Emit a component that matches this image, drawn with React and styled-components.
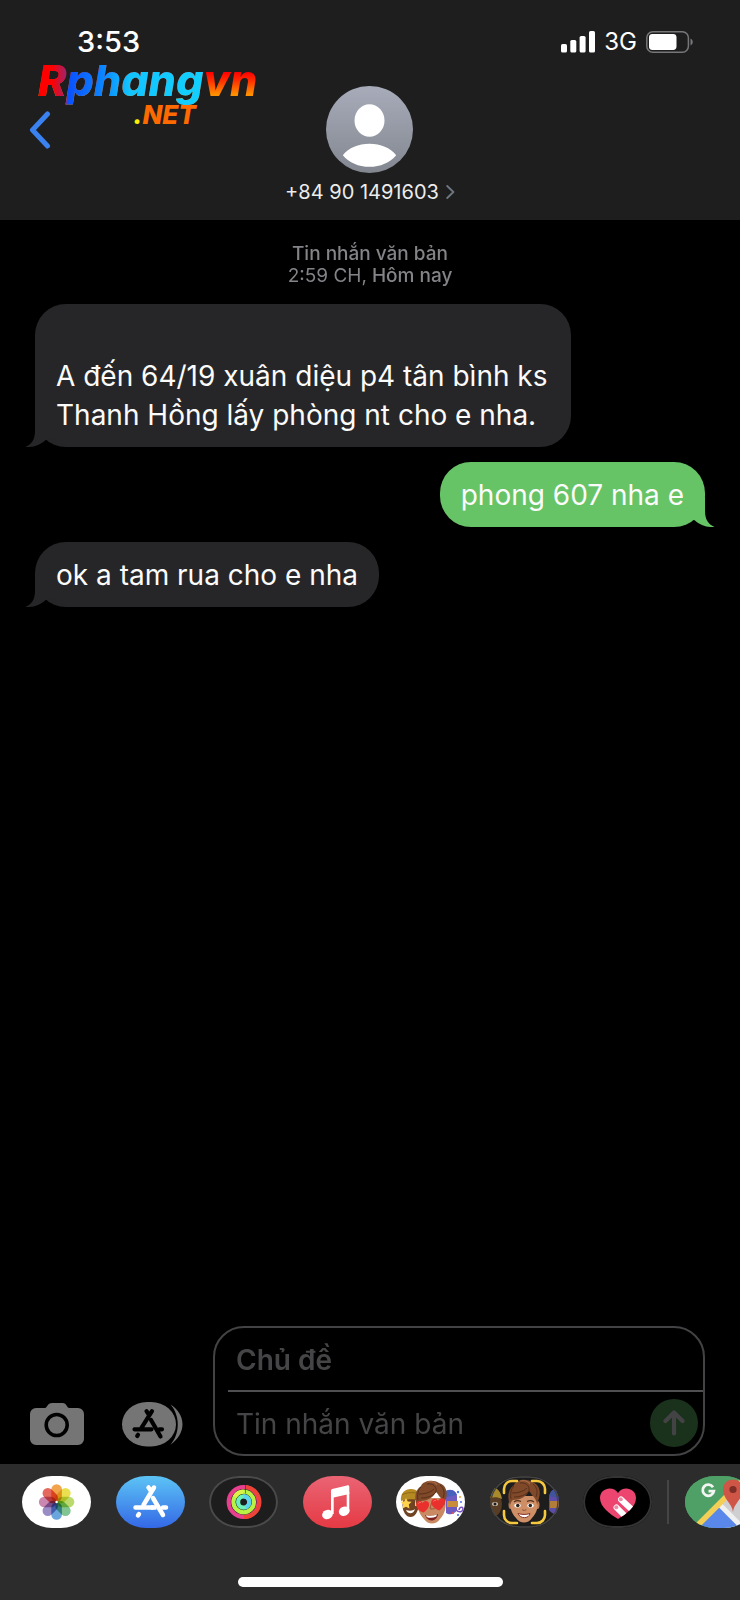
import React from 'react';
import styled, { createGlobalStyle } from 'styled-components';

const GlobalStyle = createGlobalStyle`
    * {
        box-sizing: border-box;
    }
    body {
        margin: 0;
        background: #000;
        font-family: Inter, "Liberation Sans", sans-serif;
        color: #fff;
    }
    button, input {
        font-family: inherit;
        border: none;
        background: none;
        padding: 0;
        margin: 0;
        color: inherit;
    }
    svg {
        display: block;
        flex: none;
    }
`;

const Screen = styled.div`
    min-height: 100vh;
    display: flex;
    flex-direction: column;
    overflow: hidden;
`;

/* ---------- header ---------- */

const Header = styled.header`
    position: relative;
    background: #1e1e1f;
    padding-bottom: 17px;
`;
const StatusBar = styled.div`
    display: flex;
    align-items: center;
    justify-content: space-between;
    padding: 31px 47px 33px 77px;
    height: 86px;
`;
const Time = styled.span`
    font-size: 29px;
    line-height: 22px;
    font-weight: 500;
`;
const StatusIcons = styled.div`
    display: flex;
    align-items: center;
    gap: 9px;
`;
const Network = styled.span`
    font-size: 24px;
    line-height: 22px;
`;
const Watermark = styled.div`
    position: absolute;
    top: 54px;
    left: 34px;
    display: flex;
    flex-direction: column;
    font-family: Inter, sans-serif;
    font-style: italic;
    font-weight: 800;
`;
const WatermarkName = styled.span`
    font-size: 43px;
    line-height: 52px;
    padding: 0 4px;
    color: transparent;
    background: linear-gradient(90deg, #f00 0 8%, #a0226a 14%, #0a50ff 15%, #0a84ff 30%, #12c4ff 42%, #12d0ff 75%, transparent 75%),
        linear-gradient(180deg, #f00 35%, #ff2a00 50%, #ff9100 78%);
    background-clip: text;
    -webkit-background-clip: text;
`;
const WatermarkNet = styled.span`
    align-self: center;
    padding-left: 34px;
    font-size: 26px;
    line-height: 18px;
    color: #ff6a00;
`;
const WatermarkDot = styled.span`
    color: #ffee00;
`;
const ContactRow = styled.div`
    display: grid;
    grid-template-columns: 1fr auto 1fr;
    align-items: start;
    padding: 0 28px;
`;
const BackButton = styled.button`
    justify-self: start;
    height: 87px;
    cursor: pointer;
`;
const Contact = styled.button`
    display: flex;
    flex-direction: column;
    align-items: center;
    gap: 8px;
    cursor: pointer;
`;
const Phone = styled.span`
    display: flex;
    align-items: center;
    gap: 7px;
    font-size: 20px;
    line-height: 22px;
    color: #ececec;
`;

/* ---------- messages ---------- */

const Thread = styled.main`
    flex: 1;
    display: flex;
    flex-direction: column;
    gap: 15px;
    padding: 23px 35px;
`;
const Stamp = styled.p`
    margin: 0 0 2px;
    text-align: center;
    font-size: 19px;
    line-height: 22px;
    font-weight: 500;
    color: #838388;
`;
const StampTime = styled.span`
    font-weight: 400;
`;
const Bubble = styled.div`
    position: relative;
    align-self: ${props => props.$mine ? 'flex-end' : 'flex-start'};
    max-width: 80%;
    padding: 14px 21px 12px;
    border-radius: 31px;
    background: ${props => props.$mine ? '#67c466' : '#262628'};
    color: #fbfbfb;
    font-size: 28px;
    line-height: 39px;
    white-space: pre-line;
`;
const Tail = styled.svg`
    position: absolute;
    bottom: 0;
    ${props => props.$mine ? 'right: -10px; transform: scaleX(-1);' : 'left: -10px;'}
    fill: ${props => props.$mine ? '#67c466' : '#262628'};
`;

/* ---------- composer ---------- */

const Composer = styled.form`
    display: flex;
    align-items: flex-end;
    padding: 0 35px 8px 30px;
`;
const ToolButton = styled.button`
    display: flex;
    align-items: center;
    height: 64px;
    margin-right: ${props => props.$gap}px;
    cursor: pointer;
`;
const Fields = styled.div`
    flex: 1;
    min-width: 0;
    border: 2px solid #434345;
    border-radius: 31px;
    overflow: hidden;
`;
const SubjectRow = styled.div`
    display: flex;
    height: 64px;
    margin-left: 13px;
    padding-left: 8px;
    border-bottom: 2px solid #4f4f51;
`;
const TextRow = styled.div`
    display: flex;
    align-items: center;
    height: 62px;
    padding: 0 5px 0 21px;
`;
const Field = styled.input`
    flex: 1;
    min-width: 0;
    height: 62px;
    padding-top: 2px;
    font-size: 28px;
    font-weight: ${props => props.$bold ? 600 : 400};
    outline: none;
    &::placeholder {
        color: #454547;
        opacity: 1;
    }
`;
const SendButton = styled.button`
    display: flex;
    align-items: center;
    justify-content: center;
    width: 48px;
    height: 48px;
    border-radius: 50%;
    background: #1a321b;
`;

/* ---------- app drawer ---------- */

const Drawer = styled.footer`
    background: #2c2c2c;
    padding: 12px 0 13px;
`;
const AppStrip = styled.nav`
    display: flex;
    align-items: center;
    padding-left: 22px;
`;
const Apps = styled.div`
    flex: 1;
    display: flex;
    justify-content: space-between;
`;
const AppButton = styled.button`
    flex: none;
    width: 69px;
    height: 52px;
    border-radius: 30px / 26px;
    overflow: hidden;
    background: ${props => props.$bg};
    box-shadow: inset 0 0 0 2px ${props => props.$ring || 'transparent'};
    cursor: pointer;
`;
const Divider = styled.span`
    width: 2px;
    height: 44px;
    margin: 0 16px 0 15px;
    background: #454545;
`;
const MoreApps = styled.div`
    display: flex;
    width: 55px;
    overflow: hidden;
`;
const HomeIndicator = styled.div`
    width: 265px;
    height: 10px;
    margin: 49px auto 0;
    border-radius: 5px;
    background: #fff;
`;

/* ---------- drawings ---------- */

const Signal = () => (
    <svg width="34" height="22" viewBox="0 0 34 22" fill="#fff">
        <rect x="0" y="13" width="6" height="8.5" rx="1.6" />
        <rect x="9.3" y="9" width="6" height="12.5" rx="1.6" />
        <rect x="18.6" y="5" width="6" height="16.5" rx="1.6" />
        <rect x="28" y="0" width="6" height="21.5" rx="1.6" />
    </svg>
);

const Battery = () => (
    <svg width="47" height="22" viewBox="0 0 47 22">
        <rect x="0.8" y="0.8" width="41.6" height="20.4" rx="6" fill="none" stroke="#77777a" strokeWidth="1.5" />
        <rect x="3" y="3" width="27.5" height="16" rx="3.4" fill="#fff" />
        <path d="M44.5 7.5c3 1.4 3 5.6 0 7z" fill="#77777a" />
    </svg>
);

const BackIcon = () => (
    <svg width="24" height="38" viewBox="0 0 24 38" fill="none" stroke="#3a82f0" strokeWidth="5" strokeLinecap="round" strokeLinejoin="round">
        <path d="M19.5 3L4.5 19l15 16" />
    </svg>
);

const Avatar = () => (
    <svg width="87" height="87" viewBox="0 0 87 87">
        <defs>
            <linearGradient id="avatar" x1="0" y1="0" x2="0" y2="1">
                <stop offset="0" stopColor="#a8acba" />
                <stop offset="1" stopColor="#838790" />
            </linearGradient>
        </defs>
        <circle cx="43.5" cy="43.5" r="43.5" fill="url(#avatar)" />
        <ellipse cx="43.5" cy="34.5" rx="15" ry="16.2" fill="#fff" />
        <path d="M16.8 69.2c6-7.5 15.5-11.4 26.7-11.4s20.7 3.9 26.7 11.4c-6.5 7.5-15.7 11.6-26.7 11.6s-20.2-4.1-26.7-11.6z" fill="#fff" />
    </svg>
);

const Chevron = () => (
    <svg width="9" height="14" viewBox="0 0 9 14" fill="none" stroke="#6e7780" strokeWidth="1.8" strokeLinecap="round" strokeLinejoin="round">
        <path d="M1.2 1l6.2 6-6.2 6" />
    </svg>
);

const BubbleTail = ({ mine }) => (
    <Tail $mine={mine} width="32" height="30" viewBox="0 0 32 30">
        <path d="M10 0v14C10 22 7 27.5 0.5 29.7C8 31 15 28 20.3 23.3L32 20V0z" />
    </Tail>
);

const Camera = () => (
    <svg width="54" height="42" viewBox="0 0 54 42">
        <path d="M6 5h9c2 0 2.5-5 7-5h10.500c4.5 0 4 5 7 5H48a6 6 0 0 1 6 6v25a6 6 0 0 1-6 6H6a6 6 0 0 1-6-6V11a6 6 0 0 1 6-6z" fill="#757575" />
        <circle cx="26.7" cy="22" r="10.5" fill="none" stroke="#000" strokeWidth="3.6" />
    </svg>
);

const AppStoreGray = () => (
    <svg width="61" height="45" viewBox="0 0 61 45">
        <rect x="0" y="0" width="54" height="44.5" rx="25" ry="22.25" fill="#757575" />
        <path d="M48.5 2.5c7 4.5 12 11.5 12 19.8S55.5 38 48.5 42.5C58 32 58.500 14 48.5 2.5z" fill="#757575" />
        <g fill="none" stroke="#000" strokeLinecap="round" strokeWidth="4.2">
            <path d="M24.5 9.2l2.3 3.5M30 9.2L18.5 27.3M12.5 27.3h17M37.5 27.3h2.5M29 18L38.5 34.5" />
            <path d="M16 32.8l-.8 1.2" />
        </g>
    </svg>
);

const Arrow = () => (
    <svg width="22" height="26" viewBox="0 0 22 26" fill="none" stroke="#434346" strokeWidth="4.2" strokeLinecap="round" strokeLinejoin="round">
        <path d="M11 23.5V2.5M2.5 11L11 2.5l8.5 8.5" />
    </svg>
);

const petals = ['#f09a37', '#e8dd3c', '#b5d65c', '#72bf86', '#5a9bd8', '#8f7fbf', '#c57aa6', '#e2574c'];

const Petal = styled.rect`
    mix-blend-mode: multiply;
`;

const Photos = () => (
    <svg width="69" height="52" viewBox="0 0 69 52">
        {petals.map((color, i) => (
            <Petal
                key={color}
                x="29.3"
                y="8.3"
                width="10.6"
                height="17.4"
                rx="5.3"
                fill={color}
                opacity="0.9"
                transform={`rotate(${i * 45} 34.6 26)`}
            />
        ))}
        <circle cx="34.6" cy="26" r="1.2" fill="#fff" />
    </svg>
);

const AppStore = () => (
    <svg width="69" height="52" viewBox="0 0 69 52">
        <g transform="translate(17 8.5)" stroke="#fff" strokeWidth="4.5" strokeLinecap="round">
            <path d="M15.5 3l2.5 3.5M21 3L10.5 20.5" />
            <path d="M2.5 23h17M30 23h3" />
            <path d="M20 13.5L30 30.5M6 29.5l-1 1.500" />
            <path d="M18 23h5.5" strokeLinecap="butt" />
        </g>
    </svg>
);

const Fitness = () => (
    <svg width="69" height="52" viewBox="0 0 69 52" fill="none" strokeWidth="4.2">
        <circle cx="34.7" cy="26" r="15" stroke="#e8408f" />
        <path d="M36 11A15 15 0 0 1 34.7 41" stroke="#ee4438" />
        <circle cx="34.7" cy="26" r="10.3" stroke="#b8f244" />
        <path d="M34.7 15.7a10.3 10.3 0 0 0-9 5.3" stroke="#e0f04a" />
        <circle cx="34.7" cy="26" r="5.6" stroke="#6df0b8" />
        <path d="M34.7 20.4a5.6 5.6 0 0 1 2 10.8" stroke="#5cd2f0" />
        <path d="M36.5 8.7v8.8" stroke="#1e1e1e" strokeWidth="1" opacity="0.5" />
    </svg>
);

const Music = () => (
    <svg width="69" height="52" viewBox="0 0 69 52" fill="#fff">
        <path d="M28 15.5c0-1.8.6-2.3 2.2-2.7L44 9.4c1.600-.3 2.300.3 2.300 1.8V18l-15.600 3.5V38H28z" />
        <path d="M43.7 16h2.6v19.5h-2.6z" />
        <ellipse cx="24.5" cy="38.5" rx="5.5" ry="4.6" transform="rotate(-22 24.5 38.5)" />
        <ellipse cx="41.2" cy="35.2" rx="5.5" ry="4.6" transform="rotate(-22 41.2 35.2)" />
    </svg>
);

const Hair = () => (
    <g>
        <path d="M-14 6C-17-2-16-10-10-14C-8-19 2-21 8-17C15-15 17-8 15-1L13 6C13 2 11-1 8-4C7-6 6-7 5-8C2-2-4 1-11 1C-13 2-13 4-14 6z" fill="#80492a" />
        <path d="M5-8C2-4-4-2-10-2M5-8C6-13 2-17-4-16M9-15C13-12 14-7 12-2M-10-13C-13-10-14-5-13 0M3-11C-1-7-7-6-12-6" fill="none" stroke="#57301b" strokeWidth="1" />
        <path d="M-4-18C0-19 4-18 6-15" fill="none" stroke="#a56a45" strokeWidth="1.2" />
    </g>
);

const Stickers = () => (
    <svg width="69" height="52" viewBox="0 0 69 52">
        <ellipse cx="14.5" cy="29" rx="8" ry="12" fill="#704322" />
        <path d="M5 25c-1-8 4-12 10-12s10 4 9 11c-6-1-13-1-19 1z" fill="#b58a22" />
        <path d="M6 19c5-3 12-3 18-1" fill="none" stroke="#8f6a14" strokeWidth="1" />
        <path d="M10 22l1.8 3.4 3.8.4-2.8 2.8.7 3.9-3.500-1.800-3.500 1.800.7-3.900-2.800-2.800 3.800-.4zM19 24h4v6h-4z" fill="#ffd34e" />
        <path d="M10 34c3 1 7 1 9-1-1 5-7 6-9 1z" fill="#fff" />
        <path d="M50 15c5-3 11 0 11 6v13c-3 5-8 5-11 3z" fill="#6d5bc0" />
        <path d="M50 15c4-2 9-1 11 4l-11 2z" fill="#4560bd" />
        <path d="M51 25h11v6H51z" fill="#c98d3b" />
        <path d="M60 34c3 3 7 2 7-1s-4-2-4 1" fill="none" stroke="#7853c5" strokeWidth="1.5" />
        <g fill="#4a74ee">
            <circle cx="62" cy="16" r="1.2" />
            <circle cx="65" cy="26" r="1" />
            <circle cx="62" cy="39" r="1.1" />
        </g>
        <circle cx="64" cy="21" r="1" fill="#e8a043" />
        <circle cx="57" cy="37" r="1" fill="#e85454" />
        <path d="M22 22c-2 8 1 16 6 21 4 6 12 6 16 0 5-5 7-13 5-21z" fill="#c98962" />
        <path d="M36 26c-1 4-3 5-1 7l4-.5" fill="none" stroke="#a2633f" strokeWidth="1.2" />
        <g transform="translate(35 24)">
            <Hair />
        </g>
        <path d="M29 39c5 2 9 1 13-1-1 8-10 9-13 1z" fill="#7c211f" />
        <path d="M30 39.3c4 1.300 7 .8 11-.7l-.8 2c-3 1.500-7 1.500-9.500.3z" fill="#fff" />
        <path d="M27.5 36.500c-6-2-8-6-7-9.500 1-3 5-3 6 0 2-3 6-2.500 6.500.5.500 4-2.500 7-5.500 9z" fill="#e9302c" />
        <path d="M43.5 34.500c-6-2-9-6-8-9.500 1-3 5-3 6.500 0 2-4 7-3.500 7 0 0 4-2.500 7-5.500 9.500z" fill="#e9302c" />
        <path d="M22.5 27.500c.5-1 1.500-1.300 2.500-1M37.500 25.500c.5-1 1.500-1.300 2.500-1" fill="none" stroke="#ff7a70" strokeWidth="1" />
    </svg>
);

const Memoji = () => (
    <svg width="69" height="52" viewBox="0 0 69 52">
        <ellipse cx="4" cy="28" rx="8" ry="12" fill="#593c24" />
        <path d="M0 12c7-2 11 4 12 11-4-2-8-2-12-1z" fill="#a98a2a" />
        <ellipse cx="5" cy="28" rx="3" ry="2" fill="#c9beb0" />
        <circle cx="5" cy="28" r="1.5" fill="#1c1c1c" />
        <path d="M69 12c-7 0-10 5-10 11v11c4 5 8 5 10 3z" fill="#5d4da8" />
        <path d="M69 12c-6 0-8 3-10 8l10 2z" fill="#3e549f" />
        <path d="M60 25h9v7h-9z" fill="#b27d38" />
        <ellipse cx="20.5" cy="29" rx="2" ry="4" fill="#b97852" />
        <ellipse cx="47.5" cy="29" rx="2" ry="4" fill="#b97852" />
        <path d="M21 20c-2 10 0 17 5 22 4 6 12 6 16 0 5-5 7-12 5-22z" fill="#ce8f66" />
        <g transform="translate(34 23)">
            <Hair />
        </g>
        <g fill="#fff">
            <ellipse cx="27.5" cy="29.5" rx="3.2" ry="2.1" />
            <ellipse cx="40.5" cy="29.5" rx="3.2" ry="2.1" />
        </g>
        <g fill="#2c211b">
            <circle cx="27.8" cy="29.5" r="1.8" />
            <circle cx="40.3" cy="29.5" r="1.8" />
        </g>
        <path d="M24 26c2-1.500 5-1.500 7-.5M37 25.500c2-1 5-1 7 .5" fill="none" stroke="#51301f" strokeWidth="1.3" />
        <path d="M33 33c-1 2 3 2 3 0" fill="none" stroke="#9d5f3f" strokeWidth="1.2" />
        <path d="M28 37.500c4 1.300 8 1.300 12 0-1 5.500-10 5.500-12 0z" fill="#fff" stroke="#8a3429" strokeWidth="1" />
        <path d="M14 17v-4c0-5 4-8 8-8h5M42 5h5c5 0 8 4 8 8v4M14 35v4c0 5 4 8 8 8h5M42 47h5c5 0 8-4 8-8v-4" fill="none" stroke="#f5c83e" strokeWidth="2.6" strokeLinecap="round" />
        <rect x="1" y="1" width="67" height="50" rx="29" ry="25" fill="none" stroke="#454545" strokeWidth="1.5" />
    </svg>
);

const Touch = () => (
    <svg width="69" height="52" viewBox="0 0 69 52">
        <defs>
            <clipPath id="heart">
                <path d="M35 43C27 38 17 31 17 22c0-10 13-13 18-5 5-8 18-5 18 5 0 9-10 16-18 21z" />
            </clipPath>
        </defs>
        <g clipPath="url(#heart)">
            <path d="M15 8h40v38H15z" fill="#ec456f" />
            <path d="M38 23.5l14 13M33.5 31.5l13 13" stroke="#fff" strokeWidth="6" strokeLinecap="round" />
            <circle cx="37.8" cy="23.3" r="2" fill="#f08ba4" />
            <circle cx="33.3" cy="31.3" r="2" fill="#f08ba4" />
        </g>
    </svg>
);

const Maps = () => (
    <svg width="69" height="52" viewBox="0 0 69 52">
        <path d="M0 0h69v52H0z" fill="#4fa066" />
        <path d="M36 29l16-18 17-8v49H36z" fill="#cfcfd1" />
        <path d="M14 52l22-23 23 23z" fill="#5a87ea" />
        <path d="M34 28l24 24" stroke="#f0f0f1" strokeWidth="5" />
        <path d="M12 50l44-44" stroke="#f4cf58" strokeWidth="5.5" />
        <path d="M28 11.200a5.600 5.600 0 1 0 .8 4h-5.300" fill="none" stroke="#f2f5f2" strokeWidth="2.8" />
        <path d="M48 36c-1-9-10-13-10-22.500C38 8 42 3.500 48 3.500S58 8 58 13.500C58 23 49 27 48 36z" fill="#cf5546" />
        <circle cx="48" cy="13.5" r="3.6" fill="#7d2f27" />
    </svg>
);

const messages = [
    { id: 1, text: '\nA đến 64/19 xuân diệu p4 tân bình ks Thanh Hồng lấy phòng nt cho e nha.' },
    { id: 2, text: 'phong 607 nha e', mine: true },
    { id: 3, text: 'ok a tam rua cho e nha' },
];

const apps = [
    { name: 'Ảnh', bg: '#fff', icon: <Photos /> },
    { name: 'App Store', bg: 'linear-gradient(#5cc4f5, #3468e6)', icon: <AppStore /> },
    { name: 'Thể dục', bg: '#1d1d1d', ring: '#4a4a4a', icon: <Fitness /> },
    { name: 'Nhạc', bg: 'linear-gradient(#ea6474, #e53a44)', icon: <Music /> },
    { name: 'Nhãn dán Memoji', bg: '#fff', icon: <Stickers /> },
    { name: 'Memoji', bg: '#1d1d1d', icon: <Memoji /> },
    { name: 'Digital Touch', bg: '#000', ring: '#343434', icon: <Touch /> },
];

const App = () => {
    return (
        <>
            <GlobalStyle />
            <Screen>
                <Header>
                    <StatusBar>
                        <Time>3:53</Time>
                        <StatusIcons>
                            <Signal />
                            <Network>3G</Network>
                            <Battery />
                        </StatusIcons>
                    </StatusBar>
                    <ContactRow>
                        <BackButton type="button" aria-label="Quay lại">
                            <BackIcon />
                        </BackButton>
                        <Contact type="button">
                            <Avatar />
                            <Phone>
                                +84 90 1491603
                                <Chevron />
                            </Phone>
                        </Contact>
                    </ContactRow>
                    <Watermark>
                        <WatermarkName>Rphangvn</WatermarkName>
                        <WatermarkNet>
                            <WatermarkDot>.</WatermarkDot>NET
                        </WatermarkNet>
                    </Watermark>
                </Header>

                <Thread>
                    <Stamp>
                        Tin nhắn văn bản
                        <br />
                        <StampTime>2:59 CH,</StampTime> Hôm nay
                    </Stamp>
                    {messages.map(message => (
                        <Bubble key={message.id} $mine={message.mine}>
                            <BubbleTail mine={message.mine} />
                            {message.text}
                        </Bubble>
                    ))}
                </Thread>

                <Composer onSubmit={e => e.preventDefault()}>
                    <ToolButton type="button" aria-label="Máy ảnh" $gap={38}>
                        <Camera />
                    </ToolButton>
                    <ToolButton type="button" aria-label="Ứng dụng" $gap={30}>
                        <AppStoreGray />
                    </ToolButton>
                    <Fields>
                        <SubjectRow>
                            <Field $bold type="text" aria-label="Chủ đề" placeholder="Chủ đề" />
                        </SubjectRow>
                        <TextRow>
                            <Field type="text" aria-label="Tin nhắn văn bản" placeholder="Tin nhắn văn bản" />
                            <SendButton type="submit" aria-label="Gửi">
                                <Arrow />
                            </SendButton>
                        </TextRow>
                    </Fields>
                </Composer>

                <Drawer>
                    <AppStrip>
                        <Apps>
                            {apps.map(app => (
                                <AppButton key={app.name} type="button" aria-label={app.name} $bg={app.bg} $ring={app.ring}>
                                    {app.icon}
                                </AppButton>
                            ))}
                        </Apps>
                        <Divider />
                        <MoreApps>
                            <AppButton type="button" aria-label="Google Maps" $bg="#4fa066">
                                <Maps />
                            </AppButton>
                        </MoreApps>
                    </AppStrip>
                    <HomeIndicator />
                </Drawer>
            </Screen>
        </>
    )
};

export default App;
